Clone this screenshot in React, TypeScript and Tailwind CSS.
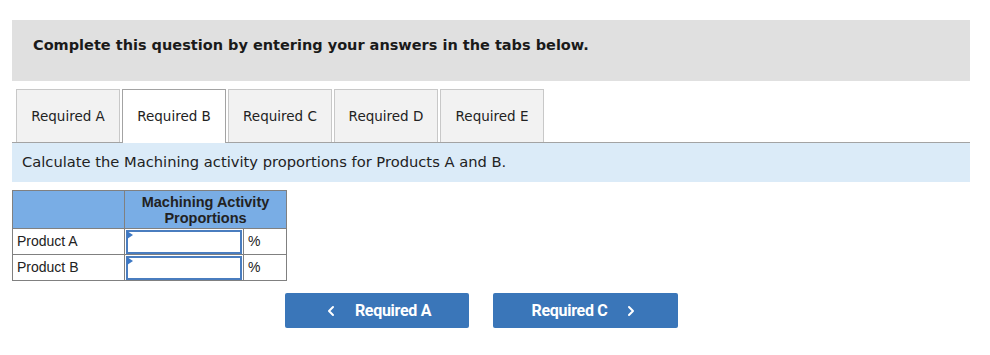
import React from "react";
import { ChevronLeft, ChevronRight } from "lucide-react";

const tabs = ["Required A", "Required B", "Required C", "Required D", "Required E"];

function InputCell() {
  return (
    <td className="border border-[#808080] p-0 w-[119px]">
      <div className="relative mx-[1px] h-[24px] border-2 border-[#4a7dbf] bg-white">
        <div className="absolute left-[-1px] top-[-1px] w-0 h-0 border-t-[4px] border-b-[4px] border-l-[6px] border-t-transparent border-b-transparent border-l-[#3d78c4]" />
      </div>
    </td>
  );
}

export default function App() {
  return (
    <div className="w-[990px] h-[355px] bg-white pt-[20px] pl-[12px]" style={{ fontFamily: '"DejaVu Sans", Verdana, sans-serif' }}>
      <div className="w-[958px]">
        <div className="h-[61px] bg-[#e0e0e0] flex items-center pl-[21px] pb-[9px]">
          <span className="text-[14.5px] font-bold text-[#1a1a1a]">Complete this question by entering your answers in the tabs below.</span>
        </div>
        <div className="mt-[8px] flex items-start gap-[2px] pl-[4px] border-b border-[#a3a3a3]">
          {tabs.map((t, i) => (
            <div
              key={t}
              className={
                i === 1
                  ? "w-[104px] h-[54px] mb-[-1px] pb-[1px] bg-white border border-b-0 border-[#a3a3a3] flex items-center justify-center text-[13.5px] text-[#222]"
                  : "w-[104px] h-[53px] bg-[#f2f2f2] border border-b-0 border-[#c8c8c8] flex items-center justify-center text-[13.5px] text-[#222]"
              }
            >
              {t}
            </div>
          ))}
        </div>
        <div className="h-[39px] bg-[#dbebf8] flex items-center pl-[10px]">
          <span className="text-[14.7px] text-[#222]">Calculate the Machining activity proportions for Products A and B.</span>
        </div>
        <table className="mt-[8px] border-collapse" style={{ fontFamily: '"Liberation Sans", Arial, sans-serif' }}>
          <thead>
            <tr className="h-[38px] bg-[#79ade5]">
              <th className="border border-[#808080] w-[112px]"></th>
              <th colSpan={2} className="border border-[#808080] text-[14.5px] font-bold leading-[16px] text-[#222]">
                Machining Activity<br />Proportions
              </th>
            </tr>
          </thead>
          <tbody>
            {["Product A", "Product B"].map((p) => (
              <tr key={p} className="h-[26px]">
                <td className="border border-[#808080] text-[14px] text-[#222] pl-[4px]">{p}</td>
                <InputCell />
                <td className="border border-[#808080] w-[43px] text-[14px] text-[#222] pl-[4px]">%</td>
              </tr>
            ))}
          </tbody>
        </table>
        <div className="mt-[12px] flex gap-[24px] pl-[273px]" style={{ fontFamily: 'Roboto, sans-serif' }}>
          <button className="w-[184px] h-[35px] bg-[#3a76b9] rounded-[2px] text-white text-[16px] font-bold flex items-center justify-center gap-[16px]">
            <ChevronLeft size={16} strokeWidth={3} />
            <span className="tracking-[-0.3px]">Required A</span>
          </button>
          <button className="w-[185px] h-[35px] bg-[#3a76b9] rounded-[2px] text-white text-[16px] font-bold flex items-center justify-center gap-[16px]">
            <span className="tracking-[-0.3px]">Required C</span>
            <ChevronRight size={16} strokeWidth={3} />
          </button>
        </div>
      </div>
    </div>
  );
}
